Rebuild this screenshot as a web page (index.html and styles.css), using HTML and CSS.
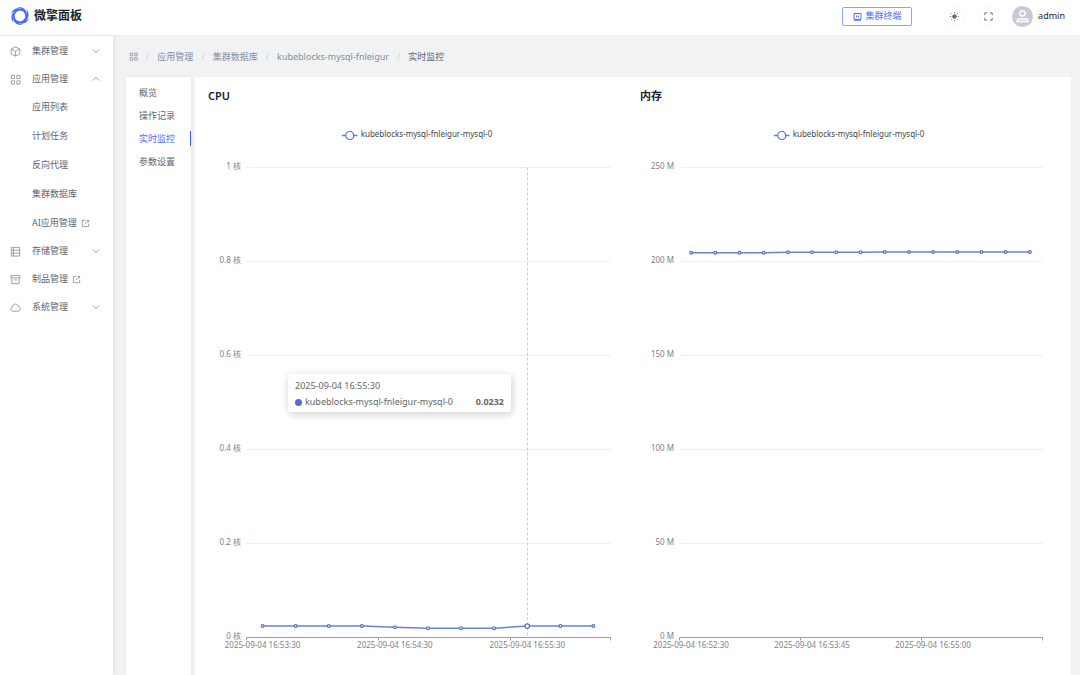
FILE: index.html
```html
<!DOCTYPE html>
<html lang="zh-CN">
<head>
    <meta charset="UTF-8">
    <meta name="viewport" content="width=device-width, initial-scale=1.0">
    <title>微擎面板 - 实时监控</title>
    <link rel="stylesheet" href="styles.css">
</head>
<body>
    <!-- Shared icons -->
    <svg class="sprite" aria-hidden="true">
        <symbol id="icon-down" viewBox="0 0 8 8"><path d="M1 2.5l3 3 3-3"/></symbol>
        <symbol id="icon-up" viewBox="0 0 8 8"><path d="M1 5.5l3-3 3 3"/></symbol>
        <symbol id="icon-apps" viewBox="0 0 12 12"><path d="M1.5 1.5h3.5v3.5h-3.5zM7.5 1.5h3.5v3.5h-3.5zM1.5 7.5h3.5v3.5h-3.5zM7.5 7.5h3.5v3.5h-3.5z"/></symbol>
        <symbol id="icon-launch" viewBox="0 0 10 10"><path d="M5 1.5H1.5v7h7V5M6.300 1.5h2.2v2.2M8.5 1.5L4.2 5.8"/></symbol>
    </svg>

    <header class="header">
        <a class="brand" href="#">
            <svg class="brand-logo" viewBox="0 0 40 40" aria-hidden="true">
                <path id="blade" d="M15 2C29 0 38 12 31 27C32 15 26 6 15 2z"/>
                <use href="#blade" transform="rotate(60 20 20)"/>
                <use href="#blade" transform="rotate(120 20 20)"/>
                <use href="#blade" transform="rotate(180 20 20)"/>
                <use href="#blade" transform="rotate(240 20 20)"/>
                <use href="#blade" transform="rotate(300 20 20)"/>
            </svg>
            <span>微擎面板</span>
        </a>
        <div class="header-tools">
            <button class="terminal-btn" type="button">
                <svg class="icon-sm" viewBox="0 0 9 9" aria-hidden="true"><path d="M1 1.500h7v6H1zM3.500 3.500v2M5.500 3.500v2M1 8.200h7"/></svg>
                集群终端
            </button>
            <button class="round-btn" type="button" aria-label="主题">
                <svg class="icon" viewBox="0 0 12 12" aria-hidden="true"><circle cx="6" cy="6" r="2" fill="currentColor"/><path d="M6 1.200v1.100M6 9.700v1.100M1.200 6h1.100M9.700 6h1.100M2.600 2.600l.8.8M8.600 8.600l.8.8M9.400 2.600l-.8.8M3.400 8.600l-.8.8"/></svg>
            </button>
            <button class="round-btn" type="button" aria-label="全屏">
                <svg class="icon" viewBox="0 0 12 12" aria-hidden="true"><path d="M2 4.500V2h2.500M7.500 2H10v2.500M10 7.500V10H7.500M4.500 10H2V7.500"/></svg>
            </button>
            <div class="user">
                <svg class="avatar" viewBox="0 0 21 21" aria-hidden="true"><circle cx="10.500" cy="10.500" r="10.500"/><path d="M10.500 4.800a2.600 2.600 0 1 1 0 5.200a2.600 2.600 0 1 1 0-5.200zM5 15.500v-.5c0-1.300.9-2 2.300-2h6.400c1.400 0 2.300.7 2.300 2v.5z"/></svg>
                <span>admin</span>
            </div>
        </div>
    </header>

    <div class="layout">
        <nav class="sidebar" aria-label="主菜单">
            <ul class="menu">
                <li>
                    <button class="menu-item" type="button">
                        <svg class="icon" viewBox="0 0 12 12" aria-hidden="true"><path d="M6 1l4.700 2.300v5.400L6 11 1.300 8.700V3.300zM1.300 3.300L6 5.700l4.700-2.400M6 5.700V11"/></svg>
                        <span>集群管理</span>
                        <svg class="arrow" aria-hidden="true"><use href="#icon-down"/></svg>
                    </button>
                </li>
                <li>
                    <button class="menu-item" type="button" aria-expanded="true">
                        <svg class="icon" aria-hidden="true"><use href="#icon-apps"/></svg>
                        <span>应用管理</span>
                        <svg class="arrow" aria-hidden="true"><use href="#icon-up"/></svg>
                    </button>
                    <ul class="submenu">
                        <li><a class="menu-item" href="#">应用列表</a></li>
                        <li><a class="menu-item" href="#">计划任务</a></li>
                        <li><a class="menu-item" href="#">反向代理</a></li>
                        <li><a class="menu-item" href="#">集群数据库</a></li>
                        <li><a class="menu-item" href="#">AI应用管理<svg class="launch" aria-hidden="true"><use href="#icon-launch"/></svg></a></li>
                    </ul>
                </li>
                <li>
                    <button class="menu-item" type="button">
                        <svg class="icon" viewBox="0 0 12 12" aria-hidden="true"><path d="M1.500 1.500h9v9.500h-9zM1.500 4.500h9M1.500 7.800h9M3.800 1.500V11"/></svg>
                        <span>存储管理</span>
                        <svg class="arrow" aria-hidden="true"><use href="#icon-down"/></svg>
                    </button>
                </li>
                <li>
                    <a class="menu-item" href="#">
                        <svg class="icon" viewBox="0 0 12 12" aria-hidden="true"><path d="M1 1.500h10v2.700H1zM2 4.200V10.500h8V4.200M4.500 6.500h3"/></svg>
                        <span>制品管理</span>
                        <svg class="launch" aria-hidden="true"><use href="#icon-launch"/></svg>
                    </a>
                </li>
                <li>
                    <button class="menu-item" type="button">
                        <svg class="icon" viewBox="0 0 12 12" aria-hidden="true"><path d="M3.200 10C1.700 10 .8 9 .8 7.800c0-1.100.8-1.900 1.800-2C2.700 3.800 4.100 2.300 6 2.300c1.700 0 3 1.100 3.300 2.700 1.200.2 2 1.200 2 2.400C11.300 8.900 10.300 10 8.800 10z"/></svg>
                        <span>系统管理</span>
                        <svg class="arrow" aria-hidden="true"><use href="#icon-down"/></svg>
                    </button>
                </li>
            </ul>
        </nav>

        <main class="main">
            <nav class="breadcrumb" aria-label="面包屑">
                <svg class="icon-crumb" aria-hidden="true"><use href="#icon-apps"/></svg>
                <i>/</i>
                <a href="#">应用管理</a>
                <i>/</i>
                <a href="#">集群数据库</a>
                <i>/</i>
                <a href="#">kubeblocks-mysql-fnleigur</a>
                <i>/</i>
                <span>实时监控</span>
            </nav>

            <div class="content">
                <nav class="tabs" aria-label="数据库详情">
                    <a href="#">概览</a>
                    <a href="#">操作记录</a>
                    <a href="#" class="active">实时监控</a>
                    <a href="#">参数设置</a>
                </nav>

                <div class="panel">
                    <section class="chart-box">
                        <h2>CPU</h2>
                        <div class="chart">
                            <svg id="cpuChart" role="img" aria-label="CPU"></svg>
                            <div class="tooltip">
                                <div>2025-09-04 16:55:30</div>
                                <div class="tooltip-row">
                                    <span class="dot"></span>
                                    <span>kubeblocks-mysql-fnleigur-mysql-0</span>
                                    <strong>0.0232</strong>
                                </div>
                            </div>
                        </div>
                    </section>
                    <section class="chart-box">
                        <h2>内存</h2>
                        <div class="chart">
                            <svg id="memoryChart" role="img" aria-label="内存"></svg>
                        </div>
                    </section>
                </div>
            </div>
        </main>
    </div>

    <script src="charts.js"></script>
</body>
</html>
```
FILE: styles.css
```css
* {
    box-sizing: border-box;
}

body {
    display: flex;
    flex-direction: column;
    height: 100vh;
    margin: 0;
    overflow: hidden;
    background-color: #f0f2f4;
    color: #5c6675;
    font-family: "Noto Sans", "Noto Sans CJK SC", sans-serif;
    font-size: 9px;
    line-height: 16px;
}

a {
    color: inherit;
    text-decoration: none;
}

button {
    padding: 0;
    border: none;
    background: none;
    color: inherit;
    font: inherit;
    cursor: pointer;
}

ul {
    margin: 0;
    padding: 0;
    list-style: none;
}

svg {
    flex: none;
    fill: none;
    stroke: currentColor;
}

.sprite {
    position: absolute;
    width: 0;
    height: 0;
}

.icon {
    width: 11px;
    height: 11px;
}

.icon-sm {
    width: 9px;
    height: 9px;
}

.icon-crumb {
    width: 9px;
    height: 9px;
}

/* Header */
.header {
    display: flex;
    flex: none;
    align-items: center;
    justify-content: space-between;
    height: 36px;
    padding: 0 15px 3px 10px;
    border-bottom: 1px solid #eceef0;
    background-color: #fff;
}

.brand {
    display: flex;
    align-items: center;
    gap: 4px;
    color: #1d2129;
    font-size: 12px;
    font-weight: 700;
}

.brand-logo {
    width: 20px;
    height: 20px;
    fill: #4468f8;
    stroke: none;
}

.header-tools {
    display: flex;
    align-items: center;
}

.terminal-btn {
    display: flex;
    align-items: center;
    justify-content: center;
    gap: 4px;
    width: 70px;
    height: 19px;
    margin-right: 32px;
    border: 1px solid #8aa4fb;
    border-radius: 2px;
    color: #4a6ef5;
}

.round-btn {
    display: flex;
    align-items: center;
    justify-content: center;
    width: 21px;
    height: 21px;
    margin-right: 13px;
    border: 1px solid #f7f8fa;
    border-radius: 50%;
}

.user {
    display: flex;
    align-items: center;
    gap: 5px;
    color: #1d2129;
}

.avatar {
    width: 21px;
    height: 21px;
    fill: #c9cad4;
    stroke: none;
}

.avatar path {
    fill: none;
    stroke: #fff;
    stroke-width: 1.4;
}

/* Sidebar */
.layout {
    display: flex;
    flex: 1;
    min-height: 0;
}

.sidebar {
    z-index: 1;
    flex: none;
    width: 113px;
    padding-top: 1px;
    background-color: #fff;
    box-shadow: 1px 0 3px rgba(0, 0, 0, 0.08);
}

.menu-item {
    display: flex;
    align-items: center;
    width: 100%;
    height: 28px;
    padding: 0 13px 0 10px;
}

.menu-item .icon {
    margin-right: 11px;
    color: #8f98a3;
}

.menu-item .arrow {
    width: 8px;
    height: 8px;
    margin-left: auto;
    color: #8f98a3;
}

.menu-item .launch {
    width: 9px;
    height: 9px;
    margin-left: 4px;
    color: #8f98a3;
}

.submenu {
    display: flex;
    flex-direction: column;
    gap: 1px;
}

.submenu .menu-item {
    padding-left: 32px;
}

/* Main area */
.main {
    display: flex;
    flex: 1;
    flex-direction: column;
    min-width: 0;
    padding: 0 9px 0 13px;
}

.breadcrumb {
    display: flex;
    flex: none;
    align-items: center;
    gap: 8px;
    height: 41px;
    padding-left: 3px;
    color: #86909c;
}

.breadcrumb i {
    color: #c9cdd4;
    font-style: normal;
}

.breadcrumb span {
    color: #5c6675;
}

.content {
    display: flex;
    flex: 1;
    gap: 4px;
    min-height: 0;
}

.tabs {
    display: flex;
    flex: none;
    flex-direction: column;
    width: 65px;
    padding-top: 4px;
    background-color: #fff;
    box-shadow: 0 0 3px rgba(0, 0, 0, 0.08);
}

.tabs a {
    padding: 0 13px;
    line-height: 23px;
}

.tabs .active {
    background: linear-gradient(#3560f5, #3560f5) right center / 1px 15px no-repeat;
    color: #4a6ef5;
}

.panel {
    display: grid;
    flex: 1;
    grid-template-columns: 1fr 1fr;
    gap: 14px;
    min-width: 0;
    padding: 11px 13px 0;
    background-color: #fff;
}

/* Charts */
.chart-box {
    display: flex;
    flex-direction: column;
    min-width: 0;
}

.chart-box h2 {
    flex: none;
    margin: 0;
    color: #1d2129;
    font-size: 11px;
    font-weight: 600;
    line-height: 16px;
}

.chart {
    position: relative;
    flex: 1;
    min-height: 0;
}

.chart svg {
    display: block;
    width: 100%;
    height: 100%;
    stroke: none;
}

.chart text {
    fill: #7d7f87;
    font-size: 8px;
}

.chart .legend-text {
    fill: #444;
}

.chart .grid-line {
    stroke: #eceef3;
}

.chart .axis-line {
    stroke: #9a9ca3;
}

.chart .pointer {
    stroke: #ccc;
    stroke-dasharray: 3 2;
}

.chart .series {
    fill: none;
    stroke: #6a82d2;
    stroke-width: 1.5;
}

.chart .point {
    fill: #fff;
    stroke: #5470c6;
    stroke-width: 1.2;
}

.tooltip {
    position: absolute;
    top: 270px;
    left: 80px;
    min-width: 223px;
    padding: 4px 7px 2px;
    border-radius: 3px;
    background-color: #fff;
    box-shadow: 1px 2px 8px rgba(0, 0, 0, 0.2);
    color: #666;
    white-space: nowrap;
}

.tooltip-row {
    display: flex;
    align-items: center;
}

.tooltip .dot {
    width: 7px;
    height: 7px;
    margin-right: 3px;
    border-radius: 50%;
    background-color: #5470c6;
}

.tooltip strong {
    margin-left: auto;
}
```
FILE: charts.js
```js
const SVG_NS = 'http://www.w3.org/2000/svg';
const seriesName = 'kubeblocks-mysql-fnleigur-mysql-0';

function add(svg, tag, attrs, text) {
    const node = document.createElementNS(SVG_NS, tag);
    Object.keys(attrs).forEach(key => node.setAttribute(key, attrs[key]));
    if (text) {
        node.textContent = text;
    }
    svg.appendChild(node);
    return node;
}

// Horizontal or vertical 1px line, kept on the pixel grid
function line(svg, x1, y1, x2, y2, cls) {
    const snap = v => Math.floor(v) + 0.5;
    add(svg, 'line', { x1: snap(x1), y1: snap(y1), x2: snap(x2), y2: snap(y2), class: cls });
}

function renderChart(id, option) {
    const svg = document.getElementById(id);
    const width = svg.clientWidth;
    const height = svg.clientHeight;
    const left = option.left;
    const right = width - 16;
    const top = 63;
    const bottom = height - 38;
    svg.innerHTML = '';

    // Grid lines and y axis labels
    const steps = option.max / option.step;
    for (let i = 0; i <= steps; i++) {
        const y = bottom - (bottom - top) * i / steps;
        const label = +(option.step * i).toFixed(1) + ' ' + option.unit;
        if (i > 0) {
            line(svg, left, y, right, y, 'grid-line');
        }
        add(svg, 'text', { x: left - 5, y: y + 2, 'text-anchor': 'end' }, label);
    }

    // X axis
    const band = (right - left) / option.data.length;
    line(svg, left, bottom, right, bottom, 'axis-line');
    option.labels.forEach((label, i) => {
        const x = left + band * option.interval * i;
        line(svg, x, bottom, x, bottom + 3, 'axis-line');
        add(svg, 'text', { x: x + band / 2, y: bottom + 11, 'text-anchor': 'middle' }, label);
    });
    line(svg, right, bottom, right, bottom + 3, 'axis-line');

    // Series
    const points = option.data.map((value, i) => [
        left + band * (i + 0.5),
        bottom - (bottom - top) * value / option.max
    ]);
    if (option.active !== undefined) {
        line(svg, points[option.active][0], top, points[option.active][0], bottom, 'pointer');
    }
    add(svg, 'polyline', { points: points.join(' '), class: 'series' });
    points.forEach((p, i) => {
        add(svg, 'circle', { cx: p[0], cy: p[1], r: i === option.active ? 2.2 : 1.4, class: 'point' });
    });

    // Legend, centred over the chart
    const text = add(svg, 'text', { y: 33, class: 'legend-text' }, seriesName);
    const start = (width - text.getComputedTextLength() - 19) / 2;
    text.setAttribute('x', start + 19);
    add(svg, 'line', { x1: start, y1: 31.5, x2: start + 16, y2: 31.5, class: 'series' });
    add(svg, 'circle', { cx: start + 8, cy: 31.5, r: 4, class: 'point' });
}

function renderAll() {
    renderChart('cpuChart', {
        left: 38,
        max: 1,
        step: 0.2,
        unit: '核',
        interval: 4,
        active: 8,
        labels: ['2025-09-04 16:53:30', '2025-09-04 16:54:30', '2025-09-04 16:55:30'],
        data: [0.0232, 0.0232, 0.0232, 0.0232, 0.021, 0.0188, 0.0188, 0.0188, 0.0232, 0.0232, 0.0232]
    });
    renderChart('memoryChart', {
        left: 39,
        max: 250,
        step: 50,
        unit: 'M',
        interval: 5,
        labels: ['2025-09-04 16:52:30', '2025-09-04 16:53:45', '2025-09-04 16:55:00'],
        data: [204.4, 204.4, 204.4, 204.4, 204.6, 204.6, 204.6, 204.6, 204.8, 204.8, 204.8, 204.8, 204.8, 204.8, 204.8]
    });
}

window.addEventListener('resize', renderAll);
renderAll();
```
